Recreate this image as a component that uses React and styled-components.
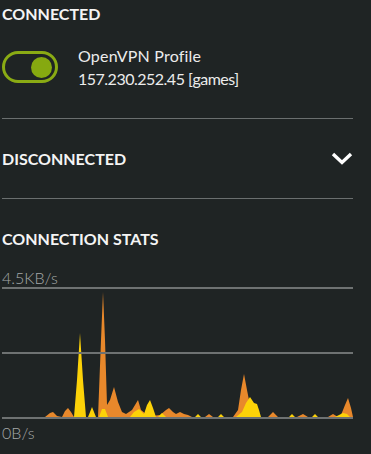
import React from "react";
import styled, { createGlobalStyle } from "styled-components";

const GlobalStyle = createGlobalStyle`
  html, body {
    margin: 0;
    padding: 0;
    background: #1f2424;
  }
  body {
    font-family: "Lato", "Open Sans", sans-serif;
    color: #f2f2f2;
  }
`;

const orange = [
  [45, 417], [50, 413], [53, 412], [57, 416], [62, 417], [65, 411], [68, 408], [71, 412], [74, 417],
  [98, 417], [101, 340], [103, 292], [105, 340], [107, 405], [110, 400], [114, 387], [118, 402],
  [122, 412], [126, 414], [132, 410], [138, 400], [141, 410], [146, 414], [152, 416], [160, 415],
  [166, 410], [169, 408], [173, 412], [176, 414], [180, 412], [184, 414], [188, 415], [192, 417],
  [205, 417], [209, 414], [213, 417], [233, 417], [238, 410], [241, 390], [244, 374], [247, 390],
  [250, 405], [254, 412], [258, 417], [268, 417], [273, 412], [278, 417], [297, 417], [303, 414],
  [308, 417], [328, 417], [333, 414], [338, 417], [341, 415], [345, 405], [348, 398], [351, 408],
  [353, 417],
];

const yellow = [
  [74, 417], [77, 380], [80, 333], [83, 380], [86, 417], [88, 417], [92, 407], [96, 417],
  [99, 417], [102, 409], [105, 409], [108, 417], [130, 417], [134, 412], [139, 409], [144, 414],
  [147, 405], [150, 400], [153, 408], [156, 417], [158, 417], [162, 413], [166, 417], [195, 417],
  [198, 414], [201, 417], [218, 417], [221, 414], [224, 417], [236, 417], [242, 412], [246, 403],
  [250, 397], [254, 403], [257, 404], [259, 410], [261, 417], [289, 417], [292, 414], [295, 417],
  [312, 417], [315, 414], [318, 417], [335, 417], [339, 415], [343, 413], [347, 414], [350, 417],
];

// chart origin in page coordinates
const toPoints = pts => pts.map(([x, y]) => `${x - 2},${y - 286}`).join(" ");

export default function App() {
  return (
    <Page>
      <GlobalStyle />
      <Heading>CONNECTED</Heading>
      <ProfileRow>
        <Toggle>
          <Knob />
        </Toggle>
        <ProfileInfo>
          <ProfileLine>OpenVPN Profile</ProfileLine>
          <ProfileLine $spacing={-0.5}>157.230.252.45 [games]</ProfileLine>
        </ProfileInfo>
      </ProfileRow>
      <Divider $top={28} />
      <CollapseRow>
        <Heading>DISCONNECTED</Heading>
        <Chevron viewBox="0 0 22 13" width="22" height="13">
          <polyline points="2,2 11,10.5 20,2" fill="none" stroke="#ffffff" strokeWidth="3.4" />
        </Chevron>
      </CollapseRow>
      <Divider />
      <StatsHeading>CONNECTION STATS</StatsHeading>
      <AxisLabel $top={21}>4.5KB/s</AxisLabel>
      <Chart viewBox="0 0 351 134" width="351" height="134">
        <polygon points={toPoints(orange)} fill="#e8882b" />
        <polygon points={toPoints(yellow)} fill="#fcd208" />
        <line x1="0" x2="351" y1="2" y2="2" stroke="#6e7272" strokeWidth="2" />
        <line x1="0" x2="351" y1="67" y2="67" stroke="#6e7272" strokeWidth="2" />
        <line x1="0" x2="351" y1="132" y2="132" stroke="#6e7272" strokeWidth="2" />
      </Chart>
      <AxisLabel $top={5}>0B/s</AxisLabel>
    </Page>
  );
}

const Page = styled.div`
  width: 351px;
  padding: 4px 18px 0 2px;
  display: flex;
  flex-direction: column;
`;

const Heading = styled.div`
  font-weight: 700;
  font-size: 16px;
  line-height: 20px;
  color: #f4f4f4;
`;

const ProfileRow = styled.div`
  display: flex;
  align-items: center;
  gap: 20px;
  margin-top: 20px;
`;

const Toggle = styled.div`
  box-sizing: border-box;
  width: 56px;
  height: 32px;
  border: 3px solid #8aab14;
  border-radius: 16px;
  display: flex;
  align-items: center;
  justify-content: flex-end;
  padding-right: 3px;
`;

const Knob = styled.div`
  width: 21px;
  height: 21px;
  border-radius: 50%;
  background: #86a910;
`;

const ProfileInfo = styled.div`
  display: flex;
  flex-direction: column;
`;

const ProfileLine = styled.div`
  font-size: 16px;
  line-height: 23px;
  letter-spacing: ${p => (p.$spacing ?? 0.2)}px;
  color: #ececec;
`;

const Divider = styled.hr`
  border: 0;
  height: 1px;
  background: #6a6f6f;
  margin: ${p => p.$top || 0}px 0 0;
`;

const CollapseRow = styled.div`
  display: flex;
  align-items: center;
  justify-content: space-between;
  height: 79px;
`;

const Chevron = styled.svg`
  display: block;
`;

const StatsHeading = styled(Heading)`
  margin-top: 30px;
`;

const AxisLabel = styled.div`
  font-size: 16px;
  font-weight: 300;
  line-height: 16px;
  color: #a4a8a8;
  margin-top: ${p => p.$top}px;
`;

const Chart = styled.svg`
  display: block;
`;
